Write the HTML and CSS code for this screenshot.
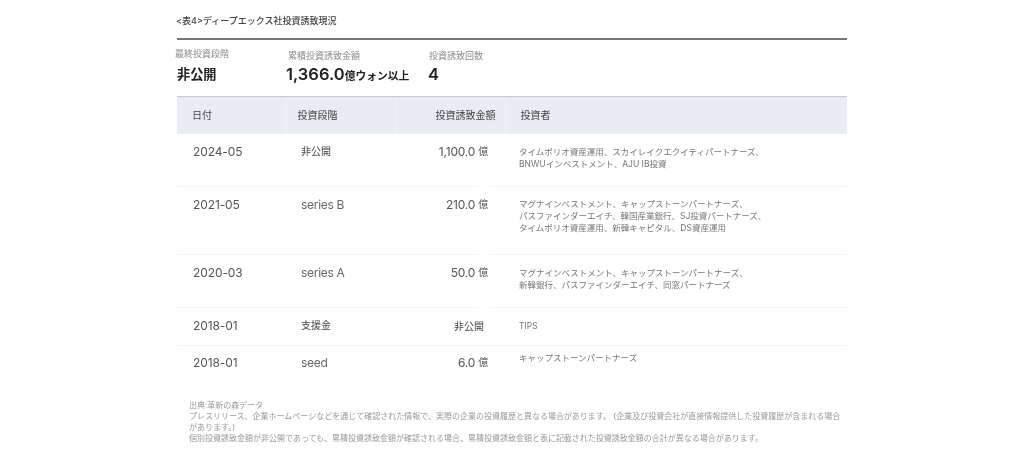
FILE: index.html
```html
<!DOCTYPE html>
<html lang="ja">
<head>
<meta charset="utf-8">
<title>ディープエックス社投資誘致現況</title>
<link rel="stylesheet" href="styles.css">
</head>
<body>
<main class="page">
  <h1 class="title"><span class="title-text">&lt;表4&gt;ディープエックス社投資誘致現況</span></h1>
  <section class="summary">
    <div class="stat stat-stage">
      <div class="stat-label">最終投資段階</div>
      <div class="stat-value cjk">非公開</div>
    </div>
    <div class="stat stat-total">
      <div class="stat-label">累積投資誘致金額</div>
      <div class="stat-value">1,366.0<span class="stat-unit">億ウォン以上</span></div>
    </div>
    <div class="stat stat-count">
      <div class="stat-label">投資誘致回数</div>
      <div class="stat-value">4</div>
    </div>
  </section>
  <table class="rounds">
    <thead>
      <tr>
        <th class="col-date">日付</th>
        <th class="col-stage">投資段階</th>
        <th class="col-amount">投資誘致金額</th>
        <th class="col-investors">投資者</th>
      </tr>
    </thead>
    <tbody>
      <tr class="row-a">
        <td class="date">2024-05</td>
        <td class="stage cjk-cell">非公開</td>
        <td class="amount">1,100.0<span class="unit">億</span></td>
        <td class="investors">タイムポリオ資産運用、スカイレイクエクイティパートナーズ、<br>BNWUインベストメント、AJU IB投資</td>
      </tr>
      <tr class="row-b">
        <td class="date">2021-05</td>
        <td class="stage">series B</td>
        <td class="amount">210.0<span class="unit">億</span></td>
        <td class="investors">マグナインベストメント、キャップストーンパートナーズ、<br>パスファインダーエイチ、韓国産業銀行、SJ投資パートナーズ、<br>タイムポリオ資産運用、新韓キャピタル、DS資産運用</td>
      </tr>
      <tr class="row-c">
        <td class="date">2020-03</td>
        <td class="stage">series A</td>
        <td class="amount">50.0<span class="unit">億</span></td>
        <td class="investors">マグナインベストメント、キャップストーンパートナーズ、<br>新韓銀行、パスファインダーエイチ、同窓パートナーズ</td>
      </tr>
      <tr class="row-d">
        <td class="date">2018-01</td>
        <td class="stage cjk-cell">支援金</td>
        <td class="amount amount-private">非公開</td>
        <td class="investors">TIPS</td>
      </tr>
      <tr class="row-e">
        <td class="date">2018-01</td>
        <td class="stage">seed</td>
        <td class="amount">6.0<span class="unit">億</span></td>
        <td class="investors">キャップストーンパートナーズ</td>
      </tr>
    </tbody>
  </table>
  <footer class="notes">
    <p>出典:革新の森データ</p>
    <p>プレスリリース、企業ホームページなどを通じて確認された情報で、実際の企業の投資履歴と異なる場合があります。 (企業及び投資会社が直接情報提供した投資履歴が含まれる場合があります。)</p>
    <p>個別投資誘致金額が非公開であっても、累積投資誘致金額が確認される場合、累積投資誘致金額と表に記載された投資誘致金額の合計が異なる場合があります。</p>
  </footer>
</main>
</body>
</html>
```

FILE: styles.css
```css
* { box-sizing: border-box; }
html, body { margin: 0; padding: 0; background: #fff; }
body {
  font-family: Inter, "Noto Sans CJK JP", "Liberation Sans", sans-serif;
  color: #444;
  overflow: hidden;
}
.page { width: 670px; height: 468px; margin: 0 auto; filter: blur(0.45px); }
.title {
  margin: 0;
  padding-top: 15px;
  height: 40px;
  font-size: 9px;
  line-height: 12px;
  font-weight: 500;
  color: #444;
  border-bottom: 2px solid #777;
}
.title-text { margin-left: -1px; }
.summary { display: flex; height: 56px; padding-top: 7px; margin-left: -2px; }
.stat-stage { width: 111px; }
.stat-total { width: 142px; }
.stat-label { font-size: 9px; line-height: 13px; color: #888; }
.stat-total .stat-label { padding-left: 2px; padding-top: 2px; }
.stat-count .stat-label { padding-left: 1px; padding-top: 2px; }
.stat-value { line-height: 24px; font-weight: 600; color: #222; font-size: 16.5px; }
.stat-stage .stat-value { padding-left: 2px; font-size: 13.2px; font-weight: 700; margin-top: 2px; }
.stat-unit { font-size: 10.8px; font-weight: 700; }

.rounds { width: 670px; border-collapse: collapse; table-layout: fixed; }
.col-date, .col-stage { width: 109px; }
.col-amount { width: 110px; }
.rounds th {
  height: 37px;
  padding: 0 0 2px;
  background: #e9edf3;
  border-top: 1px solid #c9cbd0;
  border-left: 1px solid #eef1f6;
  font-size: 10px;
  font-weight: 400;
  color: #444;
  text-align: left;
}
.rounds th.col-date { padding-left: 15px; border-left: 0; }
.rounds th.col-stage { padding-left: 11px; }
.rounds th.col-amount { padding-right: 9px; text-align: right; }
.rounds th.col-investors { padding-left: 15px; }
.rounds td { padding: 0; vertical-align: top; border-bottom: 1px solid #f4f4f5; position: relative; }
.row-e td { border-bottom: 0; }
.row-a td { height: 53px; }
.row-b td { height: 68px; }
.row-c td { height: 53px; }
.row-d td { height: 38px; }
.row-e td { height: 40px; }
.rounds .row-a .amount::after,
.rounds .row-b .amount::after,
.rounds .row-c .amount::after {
  content: "";
  position: absolute;
  right: 15px;
  bottom: -1px;
  width: 12px;
  height: 1px;
  background: #fff;
}
.rounds .date { padding-left: 16px; padding-top: 9px; font-size: 12px; line-height: 17px; color: #555; letter-spacing: -0.1px; }
.rounds .stage { padding-left: 15px; padding-top: 9px; font-size: 12px; line-height: 17px; color: #666; letter-spacing: -0.3px; }
.rounds .cjk-cell { font-size: 10px; color: #444; letter-spacing: 0; padding-left: 15px; }
.rounds .amount { padding-right: 17px; padding-top: 9px; text-align: right; font-size: 12px; line-height: 17px; color: #555; letter-spacing: -0.2px; }
.rounds .amount-private { font-size: 10px; padding-right: 21px; color: #444; padding-top: 10px; letter-spacing: 0; }
.rounds .row-e td.date, .rounds .row-e td.stage, .rounds .row-e td.amount { padding-top: 8px; }
.unit { margin-left: 3px; font-size: 10px; color: #555; vertical-align: 1px; }
.rounds .investors { padding-left: 14px; padding-top: 12px; font-size: 8.5px; line-height: 12px; color: #777; }
.rounds .row-b .investors { padding-top: 11px; }
.rounds .row-e .investors { padding-top: 6px; }
.notes { margin-top: 14px; padding-left: 12px; padding-right: 5px; font-size: 8px; line-height: 11px; color: #999; }
.notes p { margin: 0; }
```
